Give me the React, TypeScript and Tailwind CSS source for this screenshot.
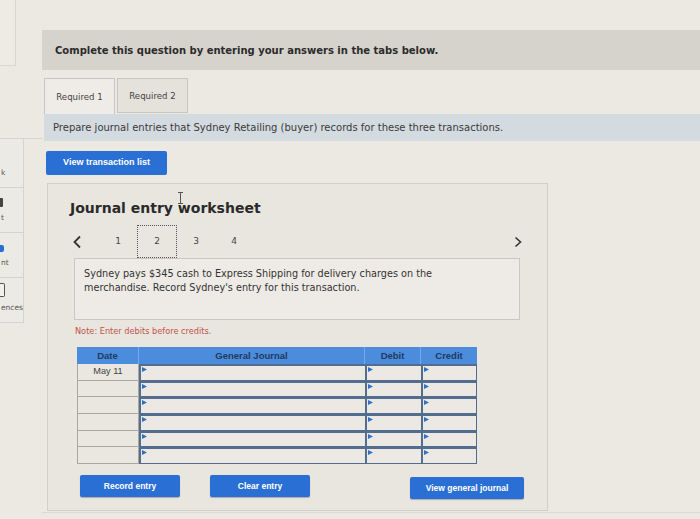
import React from "react";

const UI = { fontFamily: '"DejaVu Sans", Verdana, sans-serif' };
const ARIAL = { fontFamily: '"Liberation Sans", Arial, sans-serif' };

function SideItem({ label, h, icon }: { label: string; h: string; icon?: React.ReactNode }) {
  return (
    <div className={`${h} flex w-[24px] flex-col justify-end border-b border-r border-[#d6d3cc] bg-[#eceae4] pb-[9px]`}>
      {icon}
      <span className="pl-[1px] text-[7.5px] leading-[10px] text-[#555]" style={UI}>{label}</span>
    </div>
  );
}

function Marker() {
  return (
    <svg className="absolute left-[1px] top-[1px]" width="5" height="5" viewBox="0 0 5 5">
      <path d="M0 0 L5 2.5 L0 5 Z" fill="#2f6fc4" />
    </svg>
  );
}

function Row({ h, date }: { h: string; date?: string }) {
  return (
    <div className={`flex ${h}`}>
      <div className="flex w-[62px] items-center justify-center border-b border-l border-r border-[#aaa7a1] bg-[#eae7e1] text-[9.2px] text-[#444]" style={ARIAL}>
        {date}
      </div>
      <div className="relative w-[226px] border-b border-l-2 border-t-2 border-[#536d8e] bg-[#ece9e4]"><Marker /></div>
      <div className="relative w-[56px] border-b border-l-2 border-t-2 border-[#536d8e] bg-[#ece9e4]"><Marker /></div>
      <div className="relative w-[56px] border-b border-l-2 border-r border-t-2 border-[#536d8e] bg-[#ece9e4]"><Marker /></div>
    </div>
  );
}

function Btn({ children, w, cls = "" }: { children: React.ReactNode; w: string; cls?: string }) {
  return (
    <div
      className={`${w} ${cls} flex h-[22px] items-center justify-center rounded-[2px] bg-[#2a6fd3] text-[8.5px] font-bold text-white shadow-[0_1px_1px_rgba(0,0,0,0.25)]`}
      style={ARIAL}
    >
      {children}
    </div>
  );
}

export default function App() {
  return (
    <div className="relative flex h-[519px] w-[700px] overflow-hidden bg-[#ece9e3]">
      {/* left sidebar */}
      <div className="flex w-[42px] shrink-0 flex-col">
        <div className="h-[66px] w-[16px] border-b border-r border-[#dad7d1] bg-[#eeebe5]" />
        <div className="mt-[72px] flex flex-col border-t border-[#d6d3cc]">
          <SideItem label="k" h="h-[49px]" />
          <SideItem
            label="t"
            h="h-[45px]"
            icon={<div className="mb-[6px] h-[9px] w-[3px] rounded-r-[1px] bg-[#444]" />}
          />
          <SideItem
            label="nt"
            h="h-[45px]"
            icon={<div className="mb-[6px] h-[7px] w-[4px] rounded-r-[2px] bg-[#2a6fd3]" />}
          />
          <SideItem
            label="ences"
            h="h-[45px]"
            icon={<div className="mb-[6px] h-[14px] w-[5px] rounded-r-[2px] border border-l-0 border-[#555] bg-[#f3f1ec]" />}
          />
        </div>
      </div>

      {/* main */}
      <div className="flex min-w-0 flex-1 flex-col pt-[30px]">
        <div className="flex h-[40px] items-center bg-[#d6d3cd] pl-[13px]">
          <span className="text-[10px] font-bold text-[#2b2b2b]" style={UI}>
            Complete this question by entering your answers in the tabs below.
          </span>
        </div>

        <div className="mt-[8px] flex pl-[2px]">
          <div className="flex h-[36px] w-[71px] items-center justify-center border border-b-0 border-[#c9c6c0] bg-[#efece7] pt-[1px] text-[8.6px] text-[#444]" style={UI}>
            Required 1
          </div>
          <div className="ml-[2px] flex h-[35px] w-[71px] items-center justify-center border border-[#c9c6c0] bg-[#e5e2dc] pt-[1px] text-[8.6px] text-[#444]" style={UI}>
            Required 2
          </div>
        </div>

        <div className="ml-[2px] flex h-[27px] items-center bg-[#d3dbe0] pl-[9px]">
          <span className="text-[10px] text-[#3a3a3a]" style={UI}>
            Prepare journal entries that Sydney Retailing (buyer) records for these three transactions.
          </span>
        </div>

        <div className="ml-[4px] mt-[10px] flex h-[24px] w-[121px] items-center justify-center rounded-[2px] bg-[#2a6fd3] text-[9px] font-bold text-white" style={ARIAL}>
          View transaction list
        </div>

        {/* worksheet panel */}
        <div className="ml-[5px] mt-[8px] flex h-[328px] w-[501px] flex-col border border-[#d2cfc9] bg-[#e9e6e0]">
          <div className="relative ml-[22px] mt-[11px] h-[22px]">
            <span className="text-[14px] font-bold text-[#2a2a2a]" style={UI}>Journal entry worksheet</span>
            <svg className="absolute left-[107px] top-[-3px]" width="7" height="12" viewBox="0 0 7 12">
              <path d="M1 0.5 H6 M3.5 0.5 V11.5 M1 11.5 H6" stroke="#555" strokeWidth="1" fill="none" />
            </svg>
          </div>

          <div className="mt-[8px] flex h-[33px] items-center">
            <div className="ml-[24px] w-[27px]">
              <svg width="10" height="14" viewBox="0 0 10 14">
                <path d="M8 1.5 L2.5 7 L8 12.5" stroke="#333" strokeWidth="1.8" fill="none" />
              </svg>
            </div>
            <div className="flex w-[38px] justify-center text-[9px] text-[#444]" style={UI}>1</div>
            <div className="flex h-[33px] w-[40px] items-center justify-center border border-dotted border-[#555] text-[9px] text-[#444]" style={UI}>2</div>
            <div className="flex w-[38px] justify-center text-[9px] text-[#444]" style={UI}>3</div>
            <div className="flex w-[38px] justify-center text-[9px] text-[#444]" style={UI}>4</div>
            <div className="flex-1" />
            <div className="mr-[25px]">
              <svg width="8" height="12" viewBox="0 0 8 12">
                <path d="M1.5 1.5 L6.5 6 L1.5 10.5" stroke="#333" strokeWidth="1.6" fill="none" />
              </svg>
            </div>
          </div>

          <div className="ml-[26px] h-[62px] w-[446px] border border-[#cac7c1] bg-[#eeebe6] pl-[9px] pt-[8px]">
            <p className="text-[9.7px] leading-[14px] text-[#333]" style={UI}>
              Sydney pays $345 cash to Express Shipping for delivery charges on the
              <br />
              merchandise. Record Sydney's entry for this transaction.
            </p>
          </div>

          <div className="ml-[27px] mt-[5px] text-[8.2px] text-[#c4514a]" style={UI}>
            Note: Enter debits before credits.
          </div>

          <div className="ml-[29px] mt-[10px] flex w-[400px] flex-col">
            <div className="flex h-[17px] bg-[#4b8cdc] text-[9.5px] font-bold text-[#223a5c]" style={ARIAL}>
              <div className="flex w-[62px] items-center justify-center border-r border-[#77a7e6]">Date</div>
              <div className="flex w-[226px] items-center justify-center border-r border-[#77a7e6]">General Journal</div>
              <div className="flex w-[56px] items-center justify-center border-r border-[#77a7e6]">Debit</div>
              <div className="flex w-[56px] items-center justify-center">Credit</div>
            </div>
            <Row h="h-[17px]" date="May 11" />
            <Row h="h-[16px]" />
            <Row h="h-[17px]" />
            <Row h="h-[17px]" />
            <Row h="h-[16px]" />
            <Row h="h-[17px]" />
          </div>

          <div className="ml-[32px] mt-[11px] flex items-start">
            <Btn w="w-[100px]">Record entry</Btn>
            <Btn w="w-[100px]" cls="ml-[30px]">Clear entry</Btn>
            <Btn w="w-[114px]" cls="ml-[100px] mt-[2px]">View general journal</Btn>
          </div>
        </div>
        <div className="mt-[1px] h-[1px] bg-[#dcd9d3]" />
      </div>
    </div>
  );
}
